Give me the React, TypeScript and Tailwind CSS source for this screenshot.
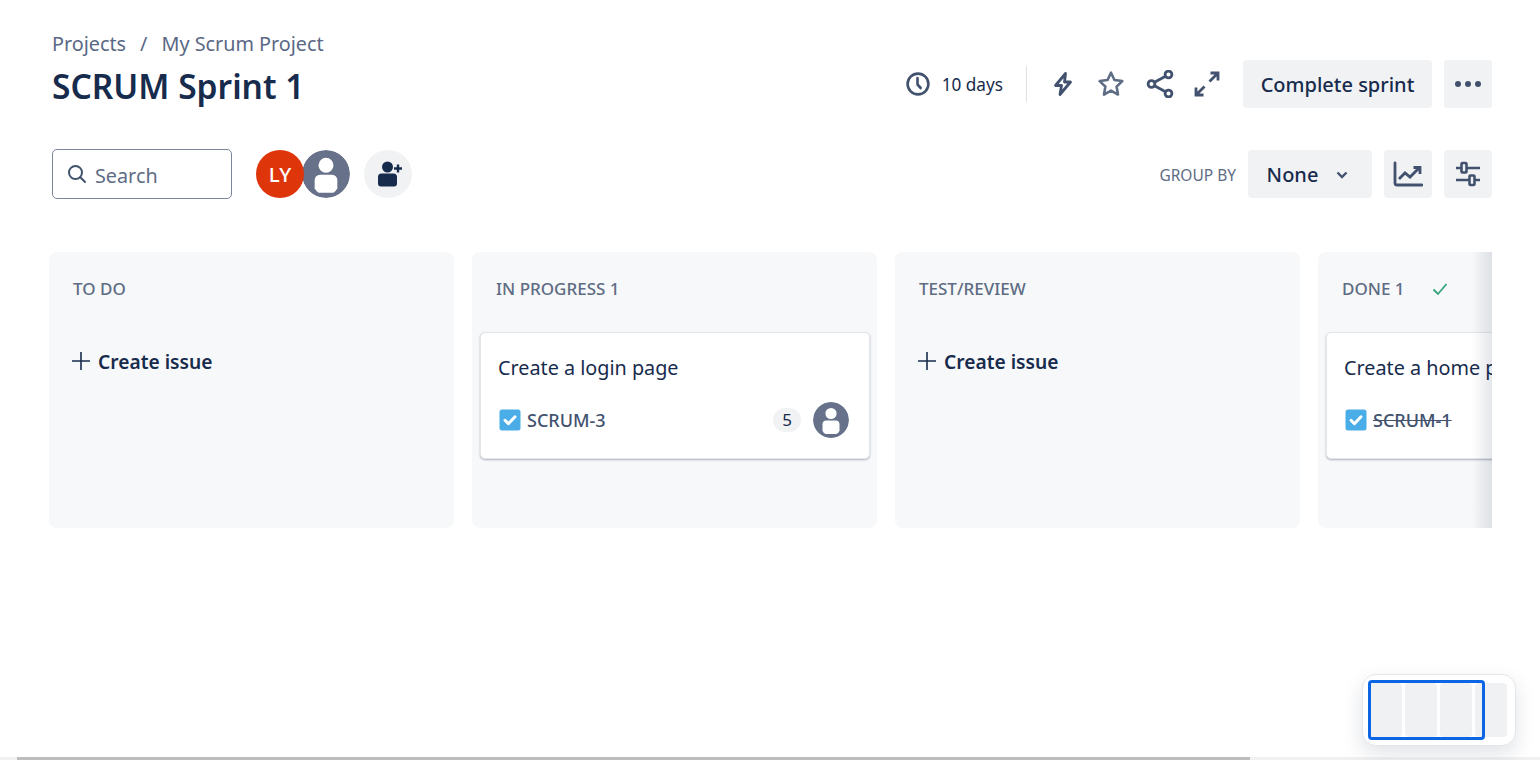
const font = { fontFamily: '"Noto Sans", sans-serif' };

function Person({ size = 36 }: { size?: number }) {
	return (
		<svg width={size} height={size} viewBox="0 0 36 36" className="shrink-0 rounded-full">
			<circle cx="18" cy="18" r="18" fill="#67718a" />
			<circle cx="18" cy="11.5" r="5.6" fill="#fff" />
			<path d="M9.5 22.5a4 4 0 0 1 4-4h9a4 4 0 0 1 4 4v6.2a7 7 0 0 1-3 3.3h-11a7 7 0 0 1-3-3.3z" fill="#fff" />
		</svg>
	);
}

function IssueIcon() {
	return (
		<svg width="22" height="22" viewBox="0 0 22 22" className="shrink-0">
			<rect x="0.5" y="0.5" width="21" height="21" rx="2.5" fill="#4bade8" />
			<path d="M6 11.3l3.4 3.4L16 7.8" fill="none" stroke="#fff" strokeWidth="3" strokeLinecap="round" strokeLinejoin="round" />
		</svg>
	);
}

function CreateIssue() {
	return (
		<div className="mt-[46px] ml-[23px] flex items-center gap-[8px] text-[19.2px] font-semibold text-[#172b4d]">
			<svg width="18" height="18" viewBox="0 0 18 18" className="-mt-[2px]">
				<path d="M9 0v18M0 9h18" stroke="#172b4d" strokeWidth="1.6" />
			</svg>
			<span className="leading-[28px]">Create issue</span>
		</div>
	);
}

function Card({ title, issue, done, points }: { title: string; issue: string; done?: boolean; points?: string }) {
	return (
		<div className="mt-[30px] ml-[8px] h-[127px] w-[390px] shrink-0 rounded-[5px] border border-[#e4e6ea] bg-white pt-[21px] pr-[20px] pl-[17px] shadow-[0_1px_2px_#091e4250]">
			<div className="text-[19.8px] leading-[28px] whitespace-nowrap text-[#172b4d]">{title}</div>
			<div className="mt-[20px] flex h-[36px] items-center">
				<div className="ml-[1px] flex items-center gap-[6px]">
					<IssueIcon />
					<span className={`text-[18px] font-medium text-[#42526e] ${done ? "line-through" : ""}`}>{issue}</span>
				</div>
				{points && (
					<div className="ml-auto flex items-center gap-[12px]">
						<span className="flex h-[24px] w-[28px] items-center justify-center rounded-full bg-[#f1f2f4] text-[17px] text-[#172b4d]">
							{points}
						</span>
						<Person />
					</div>
				)}
			</div>
		</div>
	);
}

function Column({ title, check, children }: { title: string; check?: boolean; children: React.ReactNode }) {
	return (
		<div className="h-[276px] w-[405px] shrink-0 rounded-[8px] bg-[#f7f8f9] pt-[24px]">
			<div className="flex h-[26px] items-center pl-[24px] text-[17px] font-medium whitespace-nowrap text-[#5e6c84]">
				<span>{title}</span>
				{check && (
					<svg width="16" height="14" viewBox="0 0 16 14" className="ml-[27px]">
						<path d="M1.5 7.5l4.5 4.5 8.5-10" fill="none" stroke="#36a37c" strokeWidth="1.8" />
					</svg>
				)}
			</div>
			{children}
		</div>
	);
}

function GrayButton({ className, children }: { className: string; children: React.ReactNode }) {
	return <div className={`flex h-[48px] items-center justify-center rounded-[4px] bg-[#f1f2f4] ${className}`}>{children}</div>;
}

export default function App() {
	return (
		<div style={font} className="relative flex h-[760px] w-[1540px] flex-col overflow-hidden bg-white">
			<div className="flex-1 pt-[28px] pr-[48px] pl-[49px]">
				<div className="flex items-start justify-between pl-[3px]">
					<div>
						<div className="flex h-[32px] items-center text-[19.8px] text-[#5a6885]">
							<span>Projects</span>
							<span className="mx-[14px]">/</span>
							<span>My Scrum Project</span>
						</div>
						<h1 className="mt-[1px] text-[33.5px] leading-[50px] font-semibold text-[#172b4d]">SCRUM Sprint 1</h1>
					</div>
					<div className="mt-[32px] flex items-center">
						<svg width="24" height="24" viewBox="0 0 24 24" fill="none" stroke="#42526e" strokeWidth="2.6">
							<circle cx="12" cy="12" r="10.4" />
							<path d="M11.5 6v6.5l3.2 3.5" strokeLinecap="round" strokeLinejoin="round" />
						</svg>
						<span className="ml-[12px] pt-[2px] text-[17.2px] text-[#172b4d]">10 days</span>
						<div className="mx-[23px] h-[36px] w-px bg-[#dfe1e6]" />
						<svg width="24" height="26" viewBox="0 0 24 26" className="mr-[22px] ml-[1px]" fill="none" stroke="#42526e" strokeWidth="2.8" strokeLinejoin="round">
							<path d="M14.5 2.5L4.5 14.5h6L9 23.5 19.5 11h-6z" />
						</svg>
						<svg width="28" height="28" viewBox="0 0 26 26" className="mr-[21px]" fill="none" stroke="#5e6c84" strokeWidth="2.4" strokeLinejoin="round">
							<path d="M13 2.5l3.2 6.8 7.3 1-5.3 5.1 1.3 7.4-6.5-3.6-6.5 3.6 1.3-7.4L2.5 10.3l7.3-1z" />
						</svg>
						<svg width="28" height="28" viewBox="0 0 28 28" className="mr-[20px]" fill="none" stroke="#42526e" strokeWidth="2.8">
							<circle cx="5.5" cy="14" r="3.4" />
							<circle cx="22.5" cy="4.5" r="3.4" />
							<circle cx="22.5" cy="23.5" r="3.4" />
							<path d="M8.5 12.3l11-6.1M8.5 15.7l11 6.1" />
						</svg>
						<svg width="26" height="26" viewBox="0 0 26 26" className="mr-[23px]" fill="none" stroke="#42526e" strokeWidth="2.8">
							<path d="M15.5 10.5L24 2M16.5 2H24v7.5M10.5 15.5L2 24M2 16.5V24h7.5" />
						</svg>
						<GrayButton className="w-[189px] pt-[2px] text-[20px] font-medium text-[#172b4d]">Complete sprint</GrayButton>
						<GrayButton className="ml-[12px] w-[48px] gap-[4px]">
							<span className="size-[6px] rounded-full bg-[#42526e]" />
							<span className="size-[6px] rounded-full bg-[#42526e]" />
							<span className="size-[6px] rounded-full bg-[#42526e]" />
						</GrayButton>
					</div>
				</div>

				<div className="mt-[38px] flex items-center pl-[3px]">
					<div className="flex h-[50px] w-[180px] items-center gap-[8px] rounded-[5px] border border-[#7a869a] pl-[14px] text-[19.8px] text-[#5e6c84]">
						<svg width="20" height="20" viewBox="0 0 20 20" fill="none" stroke="#42526e" strokeWidth="2">
							<circle cx="8.5" cy="8.5" r="6.5" />
							<path d="M13.3 13.3L18 18" strokeLinecap="round" />
						</svg>
						<span className="pt-[4px]">Search</span>
					</div>
					<div className="ml-[24px] flex items-center">
						<Person size={48} />
						<div className="z-10 order-first -mr-[2px] flex size-[48px] items-center justify-center rounded-full bg-[#de350b] text-[20.5px] font-medium text-white">
							LY
						</div>
					</div>
					<div className="ml-[14px] flex size-[48px] items-center justify-center rounded-full bg-[#f1f2f4]">
						<svg width="28" height="28" viewBox="0 0 28 28" fill="#172b4d" className="ml-[3px]">
							<circle cx="11.5" cy="7" r="5.5" />
							<path d="M2 17a3.5 3.5 0 0 1 3.5-3.5h12A3.5 3.5 0 0 1 21 17v6.5a3 3 0 0 1-3 3H5a3 3 0 0 1-3-3z" />
							<path d="M22 4.5v8M18 8.5h8" stroke="#172b4d" strokeWidth="2.4" />
						</svg>
					</div>
					<div className="ml-auto flex items-center">
						<span className="mr-[12px] pt-[4px] text-[15.5px] text-[#5e6c84]">GROUP BY</span>
						<GrayButton className="w-[124px] gap-[17px] pt-[2px] pr-[4px] text-[20px] font-medium text-[#172b4d]">
							<span>None</span>
							<svg width="14" height="10" viewBox="0 0 14 10" fill="none" stroke="#42526e" strokeWidth="2.4">
								<path d="M2.5 2.5L7 7l4.5-4.5" />
							</svg>
						</GrayButton>
						<GrayButton className="ml-[12px] w-[48px]">
							<svg width="30" height="26" viewBox="0 0 30 26" fill="none" stroke="#42526e" strokeWidth="2.8">
								<path d="M2 2v20a2 2 0 0 0 2 2h25" strokeLinecap="round" />
								<path d="M6 18l6-6 5 4 9-9M20.5 6.5H27V13" />
							</svg>
						</GrayButton>
						<GrayButton className="ml-[12px] w-[48px]">
							<svg width="26" height="26" viewBox="0 0 26 26" fill="none" stroke="#42526e" strokeWidth="2.6">
								<path d="M1 7h5M12 7h13M1 19h13M20 19h5" />
								<rect x="6.5" y="2" width="5" height="9.5" rx="1" />
								<rect x="14.5" y="14.5" width="5" height="9.5" rx="1" />
							</svg>
						</GrayButton>
					</div>
				</div>

				<div className="relative mt-[53px] overflow-hidden">
					<div className="flex gap-[18px]">
						<Column title="TO DO">
							<CreateIssue />
						</Column>
						<Column title="IN PROGRESS 1">
							<Card title="Create a login page" issue="SCRUM-3" points="5" />
						</Column>
						<Column title="TEST/REVIEW">
							<CreateIssue />
						</Column>
						<Column title="DONE 1" check>
							<Card title="Create a home page" issue="SCRUM-1" done />
						</Column>
					</div>
					<div className="absolute top-0 right-0 h-[276px] w-[20px] bg-gradient-to-r from-transparent to-[#091e421c]" />
				</div>
			</div>

			<div className="absolute right-[24px] bottom-[14px] flex h-[72px] w-[154px] gap-[3px] rounded-[14px] border border-[#e4e6ea] bg-white px-[7px] py-[8px] shadow-[0_8px_20px_#091e4220]">
				<div className="w-[32px] rounded-[4px] bg-[#f0f1f3]" />
				<div className="w-[32px] rounded-[4px] bg-[#f0f1f3]" />
				<div className="w-[32px] rounded-[4px] bg-[#f0f1f3]" />
				<div className="w-[32px] rounded-[4px] bg-[#f0f1f3]" />
				<div className="absolute top-[5px] left-[5px] h-[60px] w-[117px] rounded-[4px] border-[3px] border-[#0c66e4]" />
			</div>

			<div className="h-[3px] bg-[#f1f1f1] pl-[17px]">
				<div className="h-full w-[1233px] bg-[#bdbdbd]" />
			</div>
		</div>
	);
}
